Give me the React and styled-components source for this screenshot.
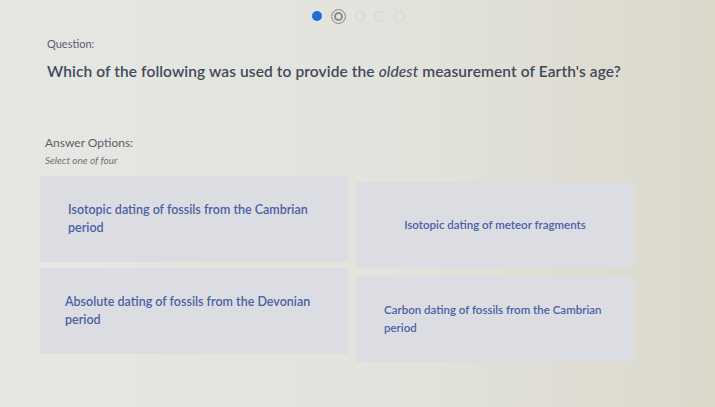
import React from 'react';
import styled, { createGlobalStyle } from 'styled-components';

const GlobalStyle = createGlobalStyle`
  html, body {
    margin: 0;
    padding: 0;
  }
  body {
    font-family: Lato, "Open Sans", sans-serif;
    background: #e4e4df;
  }
`;

const Page = styled.div`
  width: 715px;
  height: 407px;
  overflow: hidden;
  box-sizing: border-box;
  padding: 9px 82px 0 40px;
  background: linear-gradient(90deg, #e6e7e3 0%, #e3e3dd 55%, #dcd9cb 100%);
`;

const Progress = styled.div`
  display: flex;
  align-items: center;
  gap: 9px;
  margin-left: 272px;
  height: 14px;
`;

const Dot = styled.span`
  box-sizing: border-box;
  width: ${(p) => (p.$size || 11)}px;
  height: ${(p) => (p.$size || 11)}px;
  border-radius: 50%;
  background: ${(p) => (p.$filled ? '#1e6fd0' : 'transparent')};
  border: ${(p) => (p.$filled ? 'none' : `1.5px solid ${p.$color || '#d6d6d0'}`)};
  box-shadow: ${(p) => (p.$ring ? 'inset 0 0 0 2px #e3e3de, inset 0 0 0 4px #8c8c8c' : 'none')};
`;

const Label = styled.div`
  font-size: 11px;
  color: #59606b;
  margin: 14px 0 0 7px;
`;

const Question = styled.h1`
  margin: 12px 0 0 7px;
  font-size: 15.5px;
  font-weight: 600;
  color: #414a5b;
  letter-spacing: 0.1px;
  em {
    font-style: italic;
    font-weight: 500;
  }
`;

const OptionsLabel = styled.div`
  font-size: 12px;
  color: #5a606b;
  margin: 55px 0 0 5px;
`;

const Hint = styled.div`
  font-size: 10px;
  font-style: italic;
  color: #6d727a;
  margin: 4px 0 0 5px;
`;

const Grid = styled.div`
  display: grid;
  grid-template-columns: 308px 278px;
  grid-auto-rows: 86px;
  gap: 6px 8px;
  margin-top: 10px;
`;

const Card = styled.div`
  display: flex;
  align-items: center;
  justify-content: center;
  padding: 0 20px;
  background: #dcdde2;
  margin-top: ${(p) => p.$shift || 0}px;
  margin-bottom: ${(p) => -(p.$shift || 0)}px;
`;

const CardText = styled.div`
  font-size: ${(p) => (p.$small ? 11.5 : 12.5)}px;
  font-weight: 600;
  line-height: 18px;
  color: #4b5fa6;
  text-align: left;
  width: ${(p) => (p.$width ? `${p.$width}px` : 'auto')};
`;

const options = [
  { text: 'Isotopic dating of fossils from the Cambrian period', width: 252 },
  { text: 'Isotopic dating of meteor fragments', shift: 6, small: true },
  { text: 'Absolute dating of fossils from the Devonian period', width: 258 },
  { text: 'Carbon dating of fossils from the Cambrian period', width: 222, shift: 8, small: true },
];

const App = () => (
  <>
    <GlobalStyle />
    <Page>
      <Progress>
        <Dot $filled $size={10} />
        <Dot $ring $size={15} $color="#8c8c8c" />
        <Dot $size={10} />
        <Dot $size={11} />
        <Dot $size={11} />
      </Progress>
      <Label>Question:</Label>
      <Question>
        Which of the following was used to provide the <em>oldest</em> measurement of Earth's age?
      </Question>
      <OptionsLabel>Answer Options:</OptionsLabel>
      <Hint>Select one of four</Hint>
      <Grid>
        {options.map((o) => (
          <Card key={o.text} $shift={o.shift}>
            <CardText $width={o.width} $small={o.small}>{o.text}</CardText>
          </Card>
        ))}
      </Grid>
    </Page>
  </>
);

export default App;
